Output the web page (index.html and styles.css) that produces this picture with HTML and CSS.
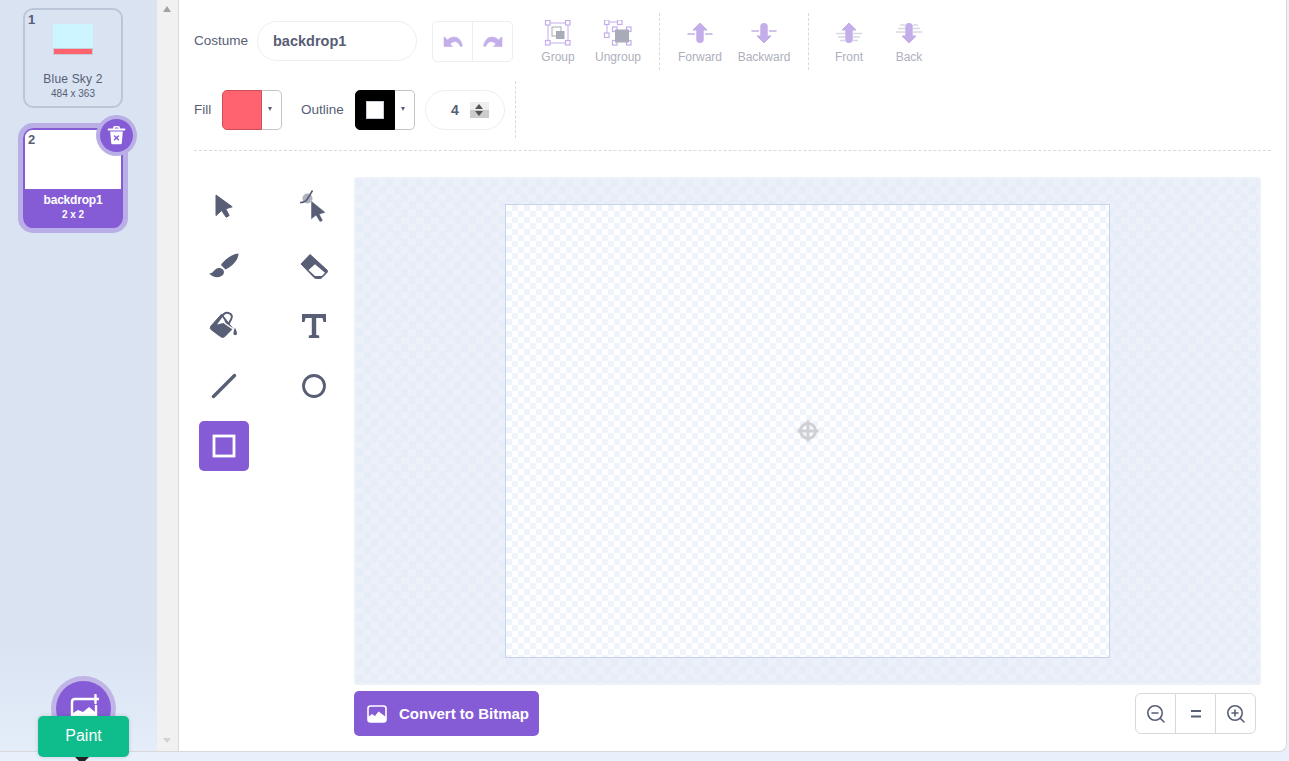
FILE: index.html
```html
<!DOCTYPE html>
<html lang="en">
<head>
    <meta charset="UTF-8">
    <title>Costume editor</title>
    <link rel="stylesheet" href="styles.css">
</head>
<body>
<div class="editor">
    <!-- Costume list -->
    <div class="sidebar">
        <div class="card">
            <span class="card-number">1</span>
            <div class="card-thumb">
                <div class="sky"><div class="ground"></div></div>
            </div>
            <div class="card-name">Blue Sky 2</div>
            <div class="card-size">484 x 363</div>
        </div>
        <div class="card card-selected">
            <span class="card-number">2</span>
            <div class="card-blank"></div>
            <div class="card-footer">
                <div class="card-name">backdrop1</div>
                <div class="card-size">2 x 2</div>
            </div>
            <div class="delete-badge">
                <svg width="24" height="26" viewBox="0 0 24 26">
                    <path d="M2 5.500h20" stroke="#fff" stroke-width="2.400" stroke-linecap="round"/>
                    <path d="M8.500 5V3.500Q8.500 2 10 2h4q1.500 0 1.500 1.500V5" fill="none" stroke="#fff" stroke-width="2"/>
                    <path d="M4 8h16l-1.300 14.500Q18.500 24 17 24H7q-1.500 0-1.700-1.500z" fill="#fff"/>
                    <path d="M9.500 13.500l5 5m0-5l-5 5" stroke="#855cd6" stroke-width="1.800" stroke-linecap="round"/>
                </svg>
            </div>
        </div>
        <div class="sidebar-fade"></div>
        <div class="add-button">
            <svg width="30" height="30" viewBox="0 0 30 30">
                <path d="M22 5H6Q3 5 3 8v15q0 3 3 3h18q3 0 3-3V11" fill="none" stroke="#fff" stroke-width="2.400"/>
                <path d="M4 24v-5l5-3 5 2 6-5 6 5v7z" fill="#fff"/>
                <path d="M26.500 1v8m-4-4h8" stroke="#fff" stroke-width="2.400" stroke-linecap="round"/>
            </svg>
        </div>
        <div class="tooltip">Paint</div>
    </div>

    <div class="scrollbar">
        <span class="scroll-up"></span>
        <span class="scroll-down"></span>
    </div>

    <div class="main">
        <!-- Top controls -->
        <div class="toolbar">
            <div class="toolbar-row">
                <span class="field-label label-costume">Costume</span>
                <div class="name-input">backdrop1</div>
                <div class="undo-group">
                    <div class="undo-button">
                        <svg width="20" height="12" viewBox="0 0 20 12">
                            <path d="M1 1v9.500h8.500L7 8q2-2.500 5-2.500 3 0 5.500 5l2-.5Q17.500 1 11 1 7 1 4.500 4L1.500 1z" fill="#c3aee9" stroke="#c3aee9" stroke-width=".6" stroke-linejoin="round"/>
                        </svg>
                    </div>
                    <div class="undo-button">
                        <svg width="20" height="12" viewBox="0 0 20 12">
                            <path transform="matrix(-1 0 0 1 20 0)" d="M1 1v9.500h8.500L7 8q2-2.500 5-2.500 3 0 5.500 5l2-.5Q17.500 1 11 1 7 1 4.500 4L1.500 1z" fill="#c3aee9" stroke="#c3aee9" stroke-width=".6" stroke-linejoin="round"/>
                        </svg>
                    </div>
                </div>
                <div class="order-buttons">
                    <div class="order-button">
                        <svg width="30" height="28" viewBox="0 1 30 28">
                            <rect x="5" y="4" width="20" height="20" fill="none" stroke="#c3aee9"/>
                            <g fill="#fff" stroke="#c3aee9" stroke-width="1.200">
                                <rect x="2.500" y="1.500" width="4.500" height="4.500"/>
                                <rect x="22.500" y="1.500" width="4.500" height="4.500"/>
                                <rect x="2.500" y="21.500" width="4.500" height="4.500"/>
                                <rect x="22.500" y="21.500" width="4.500" height="4.500"/>
                            </g>
                            <rect x="9" y="8" width="9" height="9" fill="none" stroke="#a9acb8"/>
                            <rect x="13" y="12" width="8.500" height="8" fill="#a9acb8"/>
                        </svg>
                        <span>Group</span>
                    </div>
                    <div class="order-button">
                        <svg width="30" height="28" viewBox="0 1 30 28">
                            <path d="M4 3h14M4 3v14" fill="none" stroke="#c3aee9"/>
                            <g fill="#fff" stroke="#c3aee9" stroke-width="1.200">
                                <rect x="1.500" y="1" width="4.500" height="4.500"/>
                                <rect x="14.500" y="1" width="4.500" height="4.500"/>
                                <rect x="1.500" y="14" width="4.500" height="4.500"/>
                                <rect x="9.500" y="8" width="4.500" height="4.500"/>
                                <rect x="23.500" y="8" width="4.500" height="4.500"/>
                                <rect x="9.500" y="21.500" width="4.500" height="4.500"/>
                                <rect x="23.500" y="21.500" width="4.500" height="4.500"/>
                            </g>
                            <rect x="12" y="10.500" width="14" height="13" fill="#a9acb8"/>
                        </svg>
                        <span>Ungroup</span>
                    </div>
                </div>
                <div class="dash-v sep-forward"></div>
                <div class="order-buttons order-tight">
                    <div class="order-button">
                        <svg width="30" height="28" viewBox="0 0 30 28">
                            <path d="M15 3l7 7h-3.800v10.500q0 2-3.200 2t-3.200-2V10H8z" fill="#c3aee9" stroke="#c3aee9" stroke-linejoin="round"/>
                            <path d="M2.500 14H10m10 0h7.500" stroke="#c3aee9" stroke-width="1.400"/>
                        </svg>
                        <span>Forward</span>
                    </div>
                    <div class="order-button">
                        <svg width="30" height="28" viewBox="0 0 30 28">
                            <path d="M15 23l7-7h-3.800V5.500q0-2-3.200-2t-3.200 2V16H8z" fill="#c3aee9" stroke="#c3aee9" stroke-linejoin="round"/>
                            <path d="M2.500 11H10m10 0h7.500" stroke="#c3aee9" stroke-width="1.400"/>
                        </svg>
                        <span>Backward</span>
                    </div>
                </div>
                <div class="dash-v sep-front"></div>
                <div class="order-buttons">
                    <div class="order-button">
                        <svg width="30" height="28" viewBox="0 0 30 28">
                            <path d="M15 3l7 7h-3.800v10.500q0 2-3.200 2t-3.200-2V10H8z" fill="#c3aee9" stroke="#c3aee9" stroke-linejoin="round"/>
                            <path d="M2 13.500h9m8 0h9M4 17h7m8 0h7M6 20.500h5m8 0h5" stroke="#d8d9e0" stroke-width="1.300"/>
                        </svg>
                        <span>Front</span>
                    </div>
                    <div class="order-button">
                        <svg width="30" height="28" viewBox="0 0 30 28">
                            <path d="M15 23l7-7h-3.800V5.500q0-2-3.200-2t-3.200 2V16H8z" fill="#c3aee9" stroke="#c3aee9" stroke-linejoin="round"/>
                            <path d="M2 12h9m8 0h9M4 8.500h7m8 0h7M6 5h5m8 0h5" stroke="#d8d9e0" stroke-width="1.300"/>
                        </svg>
                        <span>Back</span>
                    </div>
                </div>
            </div>
            <div class="toolbar-row toolbar-row-second">
                <span class="field-label label-fill">Fill</span>
                <div class="swatch">
                    <div class="swatch-color"></div>
                    <div class="swatch-caret"></div>
                </div>
                <span class="field-label label-outline">Outline</span>
                <div class="swatch">
                    <div class="swatch-color swatch-outline"><div class="swatch-hole"></div></div>
                    <div class="swatch-caret"></div>
                </div>
                <div class="stroke-input">
                    <span>4</span>
                    <div class="stepper">
                        <div class="step step-up"></div>
                        <div class="step step-down"></div>
                    </div>
                </div>
                <div class="dash-v sep-stroke"></div>
            </div>
        </div>

        <div class="workspace">
            <!-- Drawing tools -->
            <div class="tools">
                <div class="tool">
                    <svg width="30" height="30" viewBox="0 0 30 30">
                        <path d="M7 4v20.500l5.700-5 4.500 6.800 3-1.800-3.500-6.700 6.500-2z" fill="#575e75" stroke="#575e75" stroke-linejoin="round"/>
                    </svg>
                </div>
                <div class="tool">
                    <svg width="30" height="30" viewBox="0 0 30 30" class="tool-overflow">
                        <circle cx="8.500" cy="7.500" r="5" fill="#aeb1bd"/>
                        <path d="M1 11.500q5 0 7-3t5.500-9" fill="none" stroke="#575e75" stroke-width="1.600"/>
                        <path d="M12 9.500v19l5-3.800 4 6.500 3-1.600-3.200-6.200 6-1.800z" fill="#575e75" stroke="#fff" stroke-width=".5" stroke-linejoin="round"/>
                    </svg>
                </div>
                <div class="tool">
                    <svg width="30" height="30" viewBox="0 0 30 30" class="tool-overflow">
                        <path d="M29.500 2.500C23 3 15 9 12 14l4.500 4.500C23 15.500 29.500 9 29.500 2.500z" fill="#575e75"/>
                        <path d="M0 22.500c4.500 .5 5.500-6 10.500-5.500 3.500 .5 5.500 3 4 6-2 4-10 4.500-14.500-.5z" fill="#575e75"/>
                    </svg>
                </div>
                <div class="tool">
                    <svg width="30" height="30" viewBox="0 0 30 30">
                        <path d="M11 3.500L2 13l13 13.500q1 1 2.500 1H21q1 0 2-1l5-5q1-1.500 0-2.500z" fill="#575e75" stroke="#575e75" stroke-linejoin="round"/>
                        <path d="M9.500 19l6.500-5.700 10 8.400-3.300 3.300H16z" fill="#fff"/>
                    </svg>
                </div>
                <div class="tool">
                    <svg width="30" height="30" viewBox="0 0 30 30">
                        <path d="M1.500 15.500L12.700 3l11 14.500-8 8.200q-2 1.500-4 0l-9.500-7q-1.500-1.200-.7-2.700z" fill="#575e75" stroke="#575e75" stroke-linejoin="round"/>
                        <path d="M8 13.500l5.500-7.500 3 5.500z" fill="#fff"/>
                        <path d="M13 6q2-5 6.500-4 5 1.500 2.500 6.500L19.500 13" fill="none" stroke="#575e75" stroke-width="2"/>
                        <path d="M14 11l10 7" stroke="#fff" stroke-width="1.500"/>
                        <path d="M26 16.500q2 4 2 6a1.800 1.800 0 0 1-3.600 0q0-2 1.600-6z" fill="#575e75"/>
                    </svg>
                </div>
                <div class="tool">
                    <svg width="30" height="30" viewBox="0 0 30 30">
                        <path d="M3 3h24v8h-2.500l-1-4H17.200v17l3 .5V27H9.800v-2.500l3-.5V7H6.500l-1 4H3z" fill="#575e75"/>
                    </svg>
                </div>
                <div class="tool">
                    <svg width="30" height="30" viewBox="0 0 30 30">
                        <path d="M4.500 25.500L25.500 4.500" stroke="#575e75" stroke-width="3.400" stroke-linecap="round"/>
                    </svg>
                </div>
                <div class="tool">
                    <svg width="30" height="30" viewBox="0 0 30 30">
                        <circle cx="15" cy="15" r="10.500" fill="none" stroke="#575e75" stroke-width="2.800"/>
                    </svg>
                </div>
                <div class="tool tool-active">
                    <svg width="30" height="30" viewBox="0 0 30 30">
                        <rect x="5" y="5" width="20" height="20" fill="none" stroke="#fff" stroke-width="2.800"/>
                    </svg>
                </div>
            </div>

            <div class="canvas-column">
                <div class="canvas-outer">
                    <div class="canvas-inner">
                        <svg width="24" height="24" viewBox="0 0 24 24">
                            <g fill="none" stroke="#cfd0d6" stroke-width="3">
                                <circle cx="12" cy="12" r="7.500"/>
                                <path d="M12 1.500v21M1.500 12h21"/>
                            </g>
                        </svg>
                    </div>
                </div>
                <div class="canvas-footer">
                    <div class="convert-button">
                        <svg width="22" height="20" viewBox="0 0 22 20">
                            <rect x="2" y="2" width="18" height="16" rx="2.500" fill="none" stroke="#fff" stroke-width="1.600"/>
                            <path d="M2 17v-4l4-3 3 2 3.500-4.500L20 13v4q0 1-1 1H3q-1 0-1-1z" fill="#fff"/>
                        </svg>
                        <span>Convert to Bitmap</span>
                    </div>
                    <div class="zoom-group">
                        <div class="zoom-button">
                            <svg width="20" height="20" viewBox="0 0 20 20">
                                <circle cx="9" cy="9" r="7.200" fill="none" stroke="#575e75" stroke-width="1.600"/>
                                <path d="M14.500 14.500l3.500 3.500M6 9h6" stroke="#575e75" stroke-width="1.600" stroke-linecap="round"/>
                            </svg>
                        </div>
                        <div class="zoom-button">
                            <svg width="20" height="20" viewBox="0 0 20 20">
                                <path d="M5 7h10M5 12.500h10" stroke="#575e75" stroke-width="2.200"/>
                            </svg>
                        </div>
                        <div class="zoom-button">
                            <svg width="20" height="20" viewBox="0 0 20 20">
                                <circle cx="9" cy="9" r="7.200" fill="none" stroke="#575e75" stroke-width="1.600"/>
                                <path d="M14.500 14.500l3.500 3.500M6 9h6M9 6v6" stroke="#575e75" stroke-width="1.600" stroke-linecap="round"/>
                            </svg>
                        </div>
                    </div>
                </div>
            </div>
        </div>
    </div>
</div>
</body>
</html>
```

FILE: styles.css
```css
* {
    box-sizing: border-box;
}

body {
    margin: 0;
    height: 761px;
    overflow: hidden;
    background-color: #e8f0fc;
    font-family: "Liberation Sans", Arial, sans-serif;
    color: #575e75;
}

.editor {
    display: flex;
    width: 1287px;
    height: 752px;
    background-color: #fff;
    border-right: 1px solid #d9d9d9;
    border-bottom: 1px solid #d9d9d9;
    border-bottom-right-radius: 8px;
}

/* Costume list */
.sidebar {
    position: relative;
    flex: 0 0 157px;
    display: flex;
    flex-direction: column;
    align-items: center;
    padding: 8px 11px 0 0;
    background-color: #d9e3f2;
}

.sidebar-fade {
    position: absolute;
    left: 0;
    right: 0;
    bottom: 0;
    height: 110px;
    background: linear-gradient(rgba(233, 241, 252, 0), rgba(233, 241, 252, 0.7));
}

.card {
    position: relative;
    width: 100px;
    height: 100px;
    border: 2px solid #bdc6d8;
    border-radius: 10px;
    text-align: center;
}

.card-number {
    position: absolute;
    top: 2px;
    left: 3px;
    font-size: 13px;
    font-weight: bold;
    line-height: 15px;
}

.card-thumb {
    display: flex;
    justify-content: center;
    padding-top: 14px;
    height: 62px;
}

.sky {
    display: flex;
    align-items: flex-end;
    width: 40px;
    height: 31px;
    background-color: #ccf5ff;
}

.ground {
    width: 100%;
    height: 7px;
    background-color: #ff6370;
    border: 1px solid #c6ccd8;
}

.card-name {
    font-size: 12px;
    letter-spacing: 0.2px;
    line-height: 14px;
}

.card-size {
    font-size: 10px;
    line-height: 12px;
    margin-top: 2px;
}

.card-selected {
    margin-top: 20px;
    border-color: #855cd6;
    box-shadow: 0 0 0 5px #b9aee6;
}

.card-blank {
    height: 59px;
    background-color: #fff;
    border-radius: 8px 8px 0 0;
}

.card-footer {
    height: 39px;
    padding-top: 4px;
    background-color: #855cd6;
    border-radius: 0 0 7px 7px;
    color: #fff;
}

.card-footer .card-name {
    font-weight: bold;
    letter-spacing: -0.2px;
}

.card-footer .card-size {
    font-weight: bold;
}

.delete-badge {
    position: absolute;
    top: -11px;
    right: -12px;
    display: flex;
    align-items: center;
    justify-content: center;
    width: 33px;
    height: 33px;
    border-radius: 50%;
    background-color: #855cd6;
    box-shadow: 0 0 0 4px #b9aee6;
}

.delete-badge svg {
    width: 19px;
    height: 21px;
}

.add-button {
    position: absolute;
    left: 56px;
    top: 681px;
    display: flex;
    align-items: center;
    justify-content: center;
    width: 55px;
    height: 55px;
    border-radius: 50%;
    background-color: #855cd6;
    box-shadow: 0 0 0 5px #c1b4e6;
}

.tooltip {
    position: absolute;
    left: 38px;
    top: 716px;
    width: 91px;
    height: 41px;
    background-color: #0fbd8c;
    border-radius: 5px;
    color: #fff;
    font-size: 16px;
    line-height: 40px;
    text-align: center;
    box-shadow: 0 0 4px rgba(0, 0, 0, 0.15);
}

.tooltip::after {
    content: "";
    position: absolute;
    left: 37px;
    top: 41px;
    border-left: 7px solid transparent;
    border-right: 7px solid transparent;
    border-top: 7px solid #222;
}

/* Fake scroll bar */
.scrollbar {
    position: relative;
    flex: 0 0 22px;
    background-color: #f1f1f1;
    border-right: 1px solid #d9d9d9;
}

.scroll-up,
.scroll-down {
    position: absolute;
    left: 6px;
    border-left: 4.500px solid transparent;
    border-right: 4.500px solid transparent;
}

.scroll-up {
    top: 6px;
    border-bottom: 6px solid #a3a3a3;
}

.scroll-down {
    bottom: 8px;
    border-top: 5px solid #d3d3d3;
}

/* Main editor */
.main {
    flex: 1;
    display: flex;
    flex-direction: column;
    min-width: 0;
}

.toolbar {
    margin: 13px 15px 0 15px;
    padding-bottom: 12px;
    border-bottom: 1px dashed #d9d9d9;
}

.toolbar-row {
    display: flex;
    align-items: center;
    height: 57px;
}

.toolbar-row-second {
    margin-top: 11px;
}

.field-label {
    font-size: 13.500px;
}

.label-costume {
    width: 63px;
    position: relative;
    top: -1px;
}

.name-input {
    width: 160px;
    height: 40px;
    margin-bottom: 1px;
    padding-left: 15px;
    border: 1px solid #eceef4;
    border-radius: 20px;
    font-size: 14.500px;
    font-weight: bold;
    line-height: 39px;
}

.undo-group {
    display: flex;
    margin-left: 15px;
    height: 41px;
    border: 1px solid #eceef4;
    border-radius: 5px;
}

.undo-button {
    display: flex;
    align-items: center;
    justify-content: center;
    width: 39px;
}

.undo-button + .undo-button {
    width: 40px;
    border-left: 1px solid #eceef4;
}

.order-buttons {
    display: flex;
    margin-left: 15px;
}

.order-tight {
    margin-left: 10px;
    gap: 4px;
}

.order-button {
    display: flex;
    flex-direction: column;
    align-items: center;
    width: 60px;
    padding-top: 7px;
    height: 57px;
    font-size: 12px;
    color: #adb0bc;
}

.order-button span {
    margin-top: 2px;
    line-height: 14px;
}

.dash-v {
    width: 0;
    height: 57px;
    border-left: 1px dashed #d9d9d9;
}

.sep-forward {
    margin-left: 11px;
}

.sep-front {
    margin-left: 14px;
}

.sep-front + .order-buttons {
    margin-left: 10px;
}

.sep-stroke {
    margin-left: 10px;
}

.label-fill {
    width: 28px;
}

.label-outline {
    margin-left: 19px;
    width: 54px;
}

.swatch {
    display: flex;
    width: 60px;
    height: 40px;
}

.swatch-color {
    width: 40px;
    background-color: #ff6370;
    border: 1px solid #c94f5a;
    border-radius: 5px 0 0 5px;
}

.swatch-outline {
    display: flex;
    align-items: center;
    justify-content: center;
    background-color: #000;
    border-color: #000;
}

.swatch-hole {
    width: 18px;
    height: 18px;
    background-color: #fff;
    border: 1px solid #c6ccd8;
}

.swatch-caret {
    position: relative;
    flex: 1;
    border: 1px solid #c4c4c4;
    border-left: none;
    border-radius: 0 5px 5px 0;
}

.swatch-caret::after {
    content: "";
    position: absolute;
    left: 6px;
    top: 16px;
    border-left: 2.500px solid transparent;
    border-right: 2.500px solid transparent;
    border-top: 4px solid #575e75;
}

.stroke-input {
    display: flex;
    align-items: center;
    width: 80px;
    height: 40px;
    margin-left: 10px;
    padding-left: 25px;
    border: 1px solid #eceef4;
    border-radius: 20px;
    font-size: 14px;
    font-weight: bold;
}

.stepper {
    margin-left: 11px;
    width: 19px;
}

.step {
    position: relative;
    height: 8px;
    background-color: #eeeeee;
}

.step-down {
    background-color: #cccccc;
}

.step::after {
    content: "";
    position: absolute;
    left: 5px;
    border-left: 4.500px solid transparent;
    border-right: 4.500px solid transparent;
}

.step-up::after {
    top: 2px;
    border-bottom: 5px solid #555;
}

.step-down::after {
    top: 1px;
    border-top: 5px solid #555;
}

.workspace {
    flex: 1;
    display: flex;
    min-height: 0;
}

.tools {
    display: grid;
    grid-template-columns: 50px 50px;
    grid-auto-rows: 50px;
    column-gap: 40px;
    row-gap: 10px;
    align-content: start;
    margin: 30px 15px 0 20px;
}

.tool {
    display: flex;
    align-items: center;
    justify-content: center;
}

.tool-overflow {
    overflow: visible;
}

.tool-active {
    background-color: #855cd6;
    border-radius: 5px;
}

.canvas-column {
    flex: 1;
    margin: 26px 25px 0 0;
}

.canvas-outer {
    display: flex;
    align-items: center;
    justify-content: center;
    height: 508px;
    border: 2px solid #edf2f9;
    border-radius: 3px;
    background-color: #e6edf8;
    background-image: conic-gradient(#ebf0f9 25%, transparent 0 50%, #ebf0f9 0 75%, transparent 0);
    background-size: 15px 15px;
}

.canvas-inner {
    display: flex;
    align-items: center;
    justify-content: center;
    width: 605px;
    height: 454px;
    border: 1px solid #c5d3ec;
    background-color: #fff;
    background-image: conic-gradient(#eff4fb 25%, transparent 0 50%, #eff4fb 0 75%, transparent 0);
    background-size: 12px 12px;
}

.canvas-footer {
    display: flex;
    justify-content: space-between;
    align-items: flex-start;
    margin-top: 6px;
}

.convert-button {
    display: flex;
    align-items: center;
    gap: 11px;
    width: 185px;
    height: 45px;
    padding-left: 12px;
    background-color: #855cd6;
    border-radius: 5px;
    color: #fff;
    font-size: 15px;
    font-weight: bold;
}

.zoom-group {
    display: flex;
    margin: 2px 5px 0 0;
    height: 41px;
    border: 1px solid #d9d9d9;
    border-radius: 6px;
}

.zoom-button {
    display: flex;
    align-items: center;
    justify-content: center;
    width: 40px;
}

.zoom-button:first-child {
    width: 39px;
}

.zoom-button + .zoom-button {
    border-left: 1px solid #d9d9d9;
}
```
